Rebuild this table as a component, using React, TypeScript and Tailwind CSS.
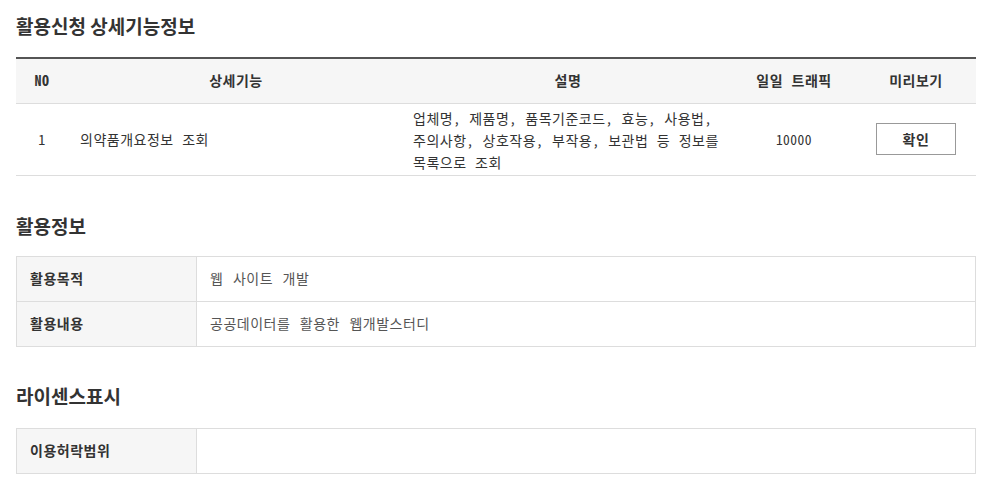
import React from 'react'

const font = "font-['Noto_Sans_Mono_CJK_KR','Noto_Sans_CJK_KR','Noto_Sans',sans-serif]"
const headFont = "font-['Noto_Sans_CJK_KR','Noto_Sans',sans-serif]"

interface InfoRow {
  label: string
  value: string
}

const usageRows: InfoRow[] = [
  { label: '활용목적', value: '웹 사이트 개발' },
  { label: '활용내용', value: '공공데이터를 활용한 웹개발스터디' }
]

const licenseRows: InfoRow[] = [{ label: '이용허락범위', value: '' }]

const SectionTitle = ({ children }: { children: React.ReactNode }) => (
  <h2 className={`${headFont} text-[19px] leading-[26px] font-bold text-[#333]`}>{children}</h2>
)

const InfoTable = ({ rows }: { rows: InfoRow[] }) => (
  <table className="w-full border-collapse border border-[#ddd] text-[14px] tracking-[0.5px] [word-spacing:2px]">
    <tbody>
      {rows.map(row => (
        <tr key={row.label} className="h-[45px]">
          <th className="w-[180px] border border-[#ddd] bg-[#f6f6f6] pl-[13px] text-left font-bold text-[#333]">
            {row.label}
          </th>
          <td className="border border-[#ddd] pl-[13px] text-[#555]">{row.value}</td>
        </tr>
      ))}
    </tbody>
  </table>
)

export default function App() {
  return (
    <div className={`${font} min-h-screen bg-white pl-4 pr-5 pt-[13px] text-[#333]`}>
      {/* 상세기능정보 */}
      <SectionTitle>활용신청 상세기능정보</SectionTitle>
      <table className="mt-[18px] w-full border-collapse border-t-2 border-[#555] text-[14px] tracking-[0.5px] [word-spacing:1px]">
        <thead>
          <tr className="h-[45px] bg-[#f6f6f6] border-b border-[#ddd]">
            <th className="w-[52px] text-center font-bold">NO</th>
            <th className="w-[336px] text-center font-bold">상세기능</th>
            <th className="w-[328px] text-center font-bold">설명</th>
            <th className="w-[124px] text-center font-bold">일일 트래픽</th>
            <th className="text-center font-bold">미리보기</th>
          </tr>
        </thead>
        <tbody>
          <tr className="border-b border-[#ddd]">
            <td className="text-center">1</td>
            <td className="pl-3">의약품개요정보 조회</td>
            <td className="break-keep pl-[9px] pr-[4px] pt-[3px] pb-[2px] leading-[22px]">
              업체명, 제품명, 품목기준코드, 효능, 사용법, 주의사항, 상호작용, 부작용, 보관법 등 정보를 목록으로 조회
            </td>
            <td className="text-center text-[13.5px]">10000</td>
            <td className="text-center">
              <button className="h-[32px] w-[80px] border border-[#999] bg-white font-bold text-[#333]">확인</button>
            </td>
          </tr>
        </tbody>
      </table>

      {/* 활용정보 */}
      <div className="mt-[37px]">
        <SectionTitle>활용정보</SectionTitle>
      </div>
      <div className="mt-[17px]">
        <InfoTable rows={usageRows} />
      </div>

      {/* 라이센스표시 */}
      <div className="mt-[36px]">
        <SectionTitle>라이센스표시</SectionTitle>
      </div>
      <div className="mt-[19px]">
        <InfoTable rows={licenseRows} />
      </div>
    </div>
  )
}
